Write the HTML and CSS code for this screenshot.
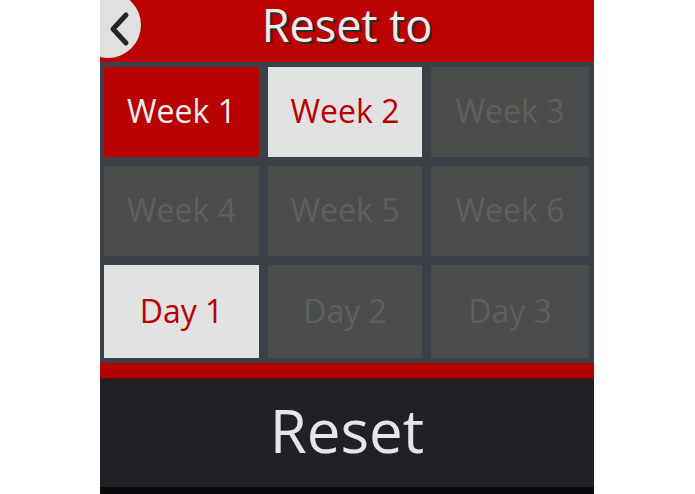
FILE: index.html
```html
<!DOCTYPE html>
<html lang="en">
<head>
    <meta charset="UTF-8">
    <meta name="viewport" content="width=device-width, initial-scale=1.0">
    <title>Reset to</title>
    <link rel="stylesheet" href="styles.css">
</head>
<body>
    <div class="screen">
        <header class="title-bar">
            <button class="back-button" aria-label="Back">
                <svg width="24" height="36" viewBox="0 0 24 36">
                    <polyline points="19,4 6,18 19,32" fill="none" stroke="#262626" stroke-width="5" stroke-linecap="round" stroke-linejoin="round"/>
                </svg>
            </button>
            <h1>Reset to</h1>
        </header>
        <main class="choice-grid">
            <div class="choice selected">Week 1</div>
            <div class="choice available">Week 2</div>
            <div class="choice">Week 3</div>
            <div class="choice">Week 4</div>
            <div class="choice">Week 5</div>
            <div class="choice">Week 6</div>
            <div class="choice available">Day 1</div>
            <div class="choice">Day 2</div>
            <div class="choice">Day 3</div>
        </main>
        <div class="divider"></div>
        <footer class="reset-bar">Reset</footer>
        <div class="bottom-edge"></div>
    </div>
</body>
</html>
```

FILE: styles.css
```css
body {
    margin: 0;
    background-color: #ffffff;
    font-family: "Open Sans", "Noto Sans", sans-serif;
}

.screen {
    width: 494px;
    height: 494px;
    margin-left: 100px;
    display: flex;
    flex-direction: column;
    overflow: hidden;
    background-color: #202126;
}

.title-bar {
    position: relative;
    height: 62px;
    background-color: #bb0000;
    display: flex;
    align-items: flex-start;
    justify-content: center;
}

.title-bar h1 {
    margin: 0;
    font-size: 45px;
    font-weight: normal;
    color: #ececec;
    text-shadow: 2px 2px 0 #2b2b2b;
    line-height: 50px;
}

.back-button {
    position: absolute;
    left: -25px;
    top: -8px;
    width: 66px;
    height: 66px;
    border: none;
    border-radius: 50%;
    background-color: #e0e0e0;
    padding: 0 0 0 25px;
    display: flex;
    align-items: center;
    justify-content: center;
    cursor: pointer;
}

.back-button svg {
    margin: 8px 4px 0 0;
}

.choice-grid {
    display: grid;
    grid-template-columns: 155px 154px 158px;
    grid-template-rows: 90px 90px 93px;
    gap: 9px;
    padding: 5px 5px 5px 4px;
    background-color: #3c4048;
}

.choice {
    display: flex;
    align-items: center;
    justify-content: center;
    background-color: #4c4c4c;
    color: #5f5f5f;
    font-size: 32px;
    padding-bottom: 3px;
}

.choice.selected {
    background-color: #b80000;
    color: #ececec;
}

.choice.available {
    background-color: #e2e2e2;
    color: #b80000;
}

.divider {
    height: 15px;
    background-color: #b50000;
    border-bottom: 1px solid #5a0a0a;
}

.reset-bar {
    height: 108px;
    box-sizing: border-box;
    display: flex;
    align-items: center;
    justify-content: center;
    color: #e6e6e6;
    font-size: 60px;
    padding-bottom: 6px;
}

.bottom-edge {
    flex: 1;
    background-color: #0a0a0a;
}
```
